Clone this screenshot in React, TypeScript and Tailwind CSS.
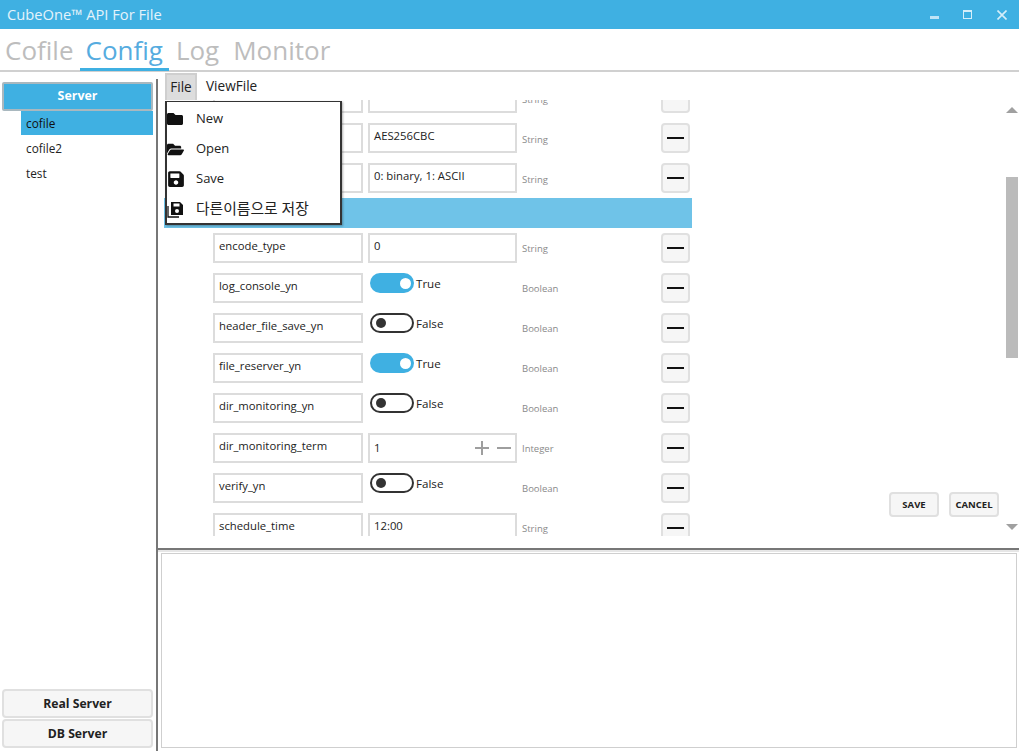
import React from "react";
import { FaFolder, FaFolderOpen, FaSave } from "react-icons/fa";

const font = { fontFamily: '"Open Sans","Noto Sans CJK KR",sans-serif' };

function Minus() {
  return (
    <button className="w-[29px] h-[30px] shrink-0 border-2 border-[#e0e0e0] rounded-[4px] bg-[#f6f6f6] flex items-center justify-center">
      <span className="block w-[17px] h-[2px] bg-[#111]" />
    </button>
  );
}

function Toggle({ on }: { on: boolean }) {
  return (
    <div className="flex items-start h-[20px] ml-[2px] gap-[2px]">
      {on ? (
        <span className="w-[44px] h-[20px] rounded-full bg-[#3fb0e2] flex items-center justify-end pr-[3px]">
          <span className="w-[11px] h-[11px] rounded-full bg-white" />
        </span>
      ) : (
        <span className="w-[44px] h-[20px] rounded-full border-2 border-[#333] bg-white flex items-center pl-[4px]">
          <span className="w-[10px] h-[10px] rounded-full bg-[#333]" />
        </span>
      )}
      <span className="text-[11.6px] leading-[22px] text-[#222]">{on ? "True" : "False"}</span>
    </div>
  );
}

function Box({ children, w }: { children?: React.ReactNode; w: string }) {
  return (
    <div className={`${w} h-[30px] shrink-0 border-2 border-[#dcdcdc] bg-white pl-[4px] text-[11.3px] leading-[21px] text-[#222]`}>
      {children}
    </div>
  );
}

function Row({ k, v, type, kind, low }: { k?: string; v?: string; type: string; kind?: "on" | "off" | "num"; low?: boolean }) {
  return (
    <div className="flex h-[30px] mb-[10px] ml-[49px] w-[477px]">
      <Box w="w-[150px]">{k}</Box>
      <div className="w-[5px] shrink-0" />
      {kind === "on" || kind === "off" ? (
        <div className="w-[149px] shrink-0">
          <Toggle on={kind === "on"} />
        </div>
      ) : kind === "num" ? (
        <div className="w-[149px] h-[30px] shrink-0 border-2 border-[#dcdcdc] pl-[4px] flex items-center justify-between pr-[4px] text-[11.3px] text-[#222]">
          <span className="pt-[1px]">1</span>
          <span className="flex items-center gap-[8px]">
            <span className="relative block w-[14px] h-[14px]">
              <span className="absolute left-0 top-[6px] w-[14px] h-[2px] bg-[#9e9e9e]" />
              <span className="absolute left-[6px] top-0 w-[2px] h-[14px] bg-[#9e9e9e]" />
            </span>
            <span className="block w-[14px] h-[2px] bg-[#9e9e9e]" />
          </span>
        </div>
      ) : (
        <Box w="w-[149px]">{v}</Box>
      )}
      <div className={`w-[144px] shrink-0 pl-[5px] ${low ? "pt-[9px]" : "pt-[8px]"} text-[9.5px] leading-[16px] text-[#8a8a8a]`}>{type}</div>
      <Minus />
    </div>
  );
}

function MenuItem({ icon, label, big }: { icon: React.ReactNode; label: string; big?: boolean }) {
  return (
    <div className="flex items-center h-[30px] text-[13px] text-[#222]">
      <span className="w-[29px] flex items-center">{icon}</span>
      <span className={big ? "text-[14.8px] leading-[18px] -mt-[2px]" : ""}>{label}</span>
    </div>
  );
}

function SaveAs() {
  return (
    <svg width="17" height="17" viewBox="0 0 17 17" fill="none">
      <path d="M1 5v11h11" stroke="#111" strokeWidth="1.3" />
      <path d="M4 1h9l3 3v10H4z" fill="#111" />
      <rect x="6.5" y="2.5" width="6" height="3" fill="#fff" />
      <circle cx="10" cy="10" r="2" fill="#fff" />
    </svg>
  );
}

export default function App() {
  return (
    <div className="w-[1019px] h-[751px] bg-white overflow-hidden flex flex-col" style={font}>
      <div className="h-[29px] shrink-0 bg-[#3fb0e2] flex items-center pl-[7px] text-[14.7px] text-[#e4f3fb]">
        <span className="flex-1">CubeOne™ API For File</span>
        <span className="flex items-center">
          <span className="w-[9px] h-[3px] bg-[#bfe4f6] mt-[6px] mr-[24px]" />
          <span className="w-[9px] h-[9px] border border-[#d5eef9] border-t-[2px] mr-[25px]" />
          <svg width="10" height="10" viewBox="0 0 10 10" className="mr-[12px]">
            <path d="M0.5 0.5l9 9M9.5 0.5l-9 9" stroke="#d5eef9" strokeWidth="1.6" />
          </svg>
        </span>
      </div>
      <div className="h-[43px] shrink-0 border-b-2 border-[#d0d0d0] flex items-start text-[26px] leading-[42px] text-[#bdbdbd] pl-[5px]">
        <span className="mr-[6px]">Cofile</span>
        <span className="text-[#56acdf] px-[6px] h-[42px] border-b-[3px] border-[#3fb0e2] mr-[7px]">Config</span>
        <span className="mr-[14px]">Log</span>
        <span>Monitor</span>
      </div>
      <div className="flex-1 flex min-h-0">
        <div className="w-[158px] shrink-0 border-r-2 border-[#777] mt-[7px] flex flex-col pl-[2px] pr-[3px] pb-[3px] text-[11.8px]">
          <div className="mt-[3px] h-[29px] shrink-0 bg-[#3fb0e2] border-2 border-[#a9b8bf] rounded-[2px] flex items-center justify-center text-white font-bold text-[12.4px]">
            Server
          </div>
          <div className="ml-[19px] h-[24px] flex items-center pl-[5px] pt-[2px] bg-[#3fb0e2] text-[#111]">cofile</div>
          <div className="ml-[19px] h-[25px] flex items-center pl-[5px] pt-[2px] text-[#222]">cofile2</div>
          <div className="ml-[19px] h-[25px] flex items-center pl-[5px] pt-[2px] text-[#222]">test</div>
          <div className="flex-1" />
          <div className="h-[29px] mb-[1px] border-2 border-[#e0e0e0] rounded-[4px] bg-[#f6f6f6] flex items-center justify-center font-bold text-[12.2px] text-[#222] pt-[1px]">
            Real Server
          </div>
          <div className="h-[29px] border-2 border-[#e0e0e0] rounded-[4px] bg-[#f6f6f6] flex items-center justify-center font-bold text-[12.2px] text-[#222] pt-[1px]">
            DB Server
          </div>
        </div>
        <div className="flex-1 min-w-0 flex flex-col">
          <div className="h-[478px] shrink-0 border-b-2 border-[#777] flex flex-col relative">
            <div className="h-[28px] shrink-0 flex items-stretch pt-[1px] pl-[7px] text-[13.6px] text-[#222]">
              <div className="w-[32px] border-2 border-[#cfcfcf] border-b-0 bg-[#dddddd] flex items-center justify-center">File</div>
              <div className="flex items-center pl-[9px]">ViewFile</div>
            </div>
            <div className="absolute left-[7px] top-[29px] w-[177px] h-[124px] border-2 border-[#333] border-t-[1px] bg-white z-10 shadow-[1px_1px_2px_rgba(0,0,0,0.3)] pt-[2px]">
              <MenuItem icon={<FaFolder size={16} color="#111" />} label="New" />
              <MenuItem icon={<FaFolderOpen size={17} color="#111" />} label="Open" />
              <MenuItem icon={<FaSave size={18} color="#111" />} label="Save" />
              <MenuItem icon={<SaveAs />} label="다른이름으로 저장" big />
            </div>
            <div className="flex-1 min-h-0 flex">
              <div className="w-[536px] shrink-0 h-[436px] overflow-hidden pl-[6px]">
                <div className="-mt-[17px]">
                  <Row type="String" low />
                  <Row v="AES256CBC" type="String" low />
                  <Row v="0: binary, 1: ASCII" type="String" low />
                  <div className="h-[30px] -mt-[5px] mb-[5px] bg-[#6fc3e8] w-[528px]" />
                  <Row k="encode_type" v="0" type="String" />
                  <Row k="log_console_yn" type="Boolean" kind="on" />
                  <Row k="header_file_save_yn" type="Boolean" kind="off" />
                  <Row k="file_reserver_yn" type="Boolean" kind="on" />
                  <Row k="dir_monitoring_yn" type="Boolean" kind="off" />
                  <Row k="dir_monitoring_term" type="Integer" kind="num" />
                  <Row k="verify_yn" type="Boolean" kind="off" />
                  <Row k="schedule_time" v="12:00" type="String" />
                </div>
              </div>
              <div className="flex-1 flex justify-end items-end pb-[31px] pr-[6px]">
                <button className="w-[50px] h-[25px] mr-[10px] pt-[2px] border-2 border-[#e0e0e0] rounded-[4px] bg-[#f6f6f6] text-[9.5px] font-bold text-[#222]">SAVE</button>
                <button className="w-[50px] h-[25px] pt-[2px] border-2 border-[#e0e0e0] rounded-[4px] bg-[#f6f6f6] text-[9.5px] font-bold text-[#222]">CANCEL</button>
              </div>
              <div className="w-[13px] shrink-0 mr-[1px] flex flex-col items-center pt-[7px] h-[448px]">
                <span className="w-0 h-0 border-x-[6px] border-x-transparent border-b-[6px] border-b-[#a0a0a0]" />
                <span className="h-[64px] shrink-0" />
                <span className="w-[12px] h-[181px] bg-[#bbbbbb]" />
                <span className="flex-1" />
                <span className="w-0 h-0 border-x-[6px] border-x-transparent border-t-[6px] border-t-[#a0a0a0] mb-[18px]" />
              </div>
            </div>
          </div>
          <div className="h-[2px] shrink-0 bg-[#e6e6e6]" />
          <div className="flex-1 min-h-0 pt-[1px] pl-[3px] pr-[2px] pb-[3px]">
            <div className="h-full border border-[#cfcfcf]" />
          </div>
        </div>
      </div>
    </div>
  );
}
